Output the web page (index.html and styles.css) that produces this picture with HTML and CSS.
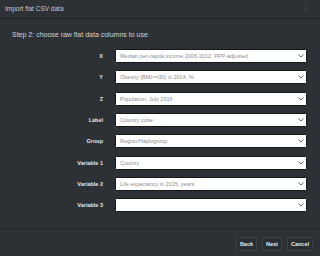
FILE: index.html
```html
<!DOCTYPE html>
<html>
<head>
<meta charset="utf-8">
<link rel="stylesheet" href="styles.css">
</head>
<body>
<div class="dialog">
  <div class="header">
    <span class="title">Import flat CSV data</span>
    <span class="close">×</span>
  </div>
  <div class="body">
    <div class="step">Step 2: choose raw flat data columns to use</div>
    <div class="form">
      <div class="label">X</div>
      <div class="select"><span>Median per-capita income 2006-2012, PPP-adjusted</span><svg class="chev" width="6" height="4" viewBox="0 0 6 4"><path d="M0.5 0.5 L3 3 L5.5 0.5" fill="none" stroke="#555" stroke-width="0.9"/></svg></div>
      <div class="label">Y</div>
      <div class="select"><span>Obesity (BMI&gt;=30) in 2014, %</span><svg class="chev" width="6" height="4" viewBox="0 0 6 4"><path d="M0.5 0.5 L3 3 L5.5 0.5" fill="none" stroke="#555" stroke-width="0.9"/></svg></div>
      <div class="label">Z</div>
      <div class="select"><span>Population, July 2016</span><svg class="chev" width="6" height="4" viewBox="0 0 6 4"><path d="M0.5 0.5 L3 3 L5.5 0.5" fill="none" stroke="#555" stroke-width="0.9"/></svg></div>
      <div class="label">Label</div>
      <div class="select"><span>Country code</span><svg class="chev" width="6" height="4" viewBox="0 0 6 4"><path d="M0.5 0.5 L3 3 L5.5 0.5" fill="none" stroke="#555" stroke-width="0.9"/></svg></div>
      <div class="label">Group</div>
      <div class="select"><span>Region/Haplogroup</span><svg class="chev" width="6" height="4" viewBox="0 0 6 4"><path d="M0.5 0.5 L3 3 L5.5 0.5" fill="none" stroke="#555" stroke-width="0.9"/></svg></div>
      <div class="label">Variable 1</div>
      <div class="select"><span>Country</span><svg class="chev" width="6" height="4" viewBox="0 0 6 4"><path d="M0.5 0.5 L3 3 L5.5 0.5" fill="none" stroke="#555" stroke-width="0.9"/></svg></div>
      <div class="label">Variable 2</div>
      <div class="select"><span>Life expectancy in 2015, years</span><svg class="chev" width="6" height="4" viewBox="0 0 6 4"><path d="M0.5 0.5 L3 3 L5.5 0.5" fill="none" stroke="#555" stroke-width="0.9"/></svg></div>
      <div class="label">Variable 3</div>
      <div class="select"><span></span><svg class="chev" width="6" height="4" viewBox="0 0 6 4"><path d="M0.5 0.5 L3 3 L5.5 0.5" fill="none" stroke="#555" stroke-width="0.9"/></svg></div>
    </div>
  </div>
  <div class="footer">
    <button class="btn">Back</button>
    <button class="btn">Next</button>
    <button class="btn">Cancel</button>
  </div>
</div>
</body>
</html>
```

FILE: styles.css
```css
html, body {
  margin: 0;
  padding: 0;
  background: #2d3135;
}
body {
  font-family: "Liberation Sans", Arial, sans-serif;
}
.dialog {
  width: 320px;
  height: 256px;
  display: flex;
  flex-direction: column;
  background: #2d3135;
}
.header {
  height: 19px;
  box-sizing: border-box;
  border-bottom: 1px solid #202327;
  display: flex;
  align-items: center;
  justify-content: space-between;
  padding: 0 12px 2px 5px;
}
.title {
  font-size: 6.5px;
  color: #c8cacc;
}
.close {
  font-size: 7px;
  color: #484d52;
}
.body {
  flex: 1;
  padding: 12px 13px 0 12px;
}
.step {
  font-size: 7px;
  color: #d0d3d6;
  height: 8px;
  line-height: 8px;
  margin-bottom: 10px;
}
.form {
  display: grid;
  grid-template-columns: 91px 192px;
  column-gap: 12px;
  row-gap: 7.33px;
}
.label {
  text-align: right;
  font-size: 5.5px;
  font-weight: bold;
  color: #e2e4e6;
  line-height: 14px;
}
.select {
  height: 14px;
  box-sizing: border-box;
  background: #fff;
  border: 1px solid #15181b;
  border-radius: 1.5px;
  display: flex;
  align-items: center;
  justify-content: space-between;
  padding: 0 2px 0 4px;
  font-size: 5.5px;
  color: #8a8d90;
}
.chev {
  display: block;
}
.footer {
  height: 28px;
  box-sizing: border-box;
  border-top: 1px solid #25282c;
  display: flex;
  justify-content: flex-end;
  align-items: flex-start;
  gap: 5px;
  padding: 8px 7px 0 0;
}
.btn {
  height: 14px;
  padding: 0 3px;
  background: #2a2e32;
  border: 1px solid #3c4146;
  border-radius: 2px;
  color: #e6e8ea;
  font-family: "Liberation Sans", Arial, sans-serif;
  font-size: 5.5px;
  font-weight: bold;
  margin: 0;
}
```
